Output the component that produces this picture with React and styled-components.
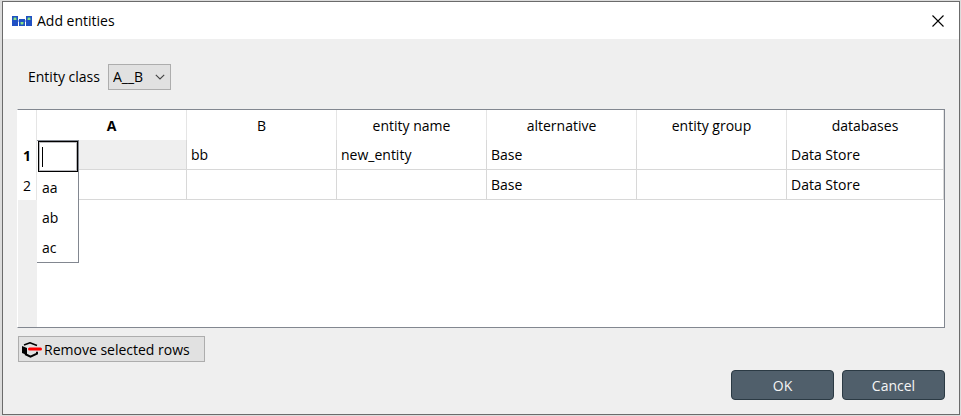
import React from "react";
import styled, { createGlobalStyle } from "styled-components";

const GlobalStyle = createGlobalStyle`
  *, *::before, *::after { box-sizing: border-box; }
  body { margin: 0; background: #dcdcdc; }
  body, button, input, select {
    font-family: "Open Sans", "Noto Sans", sans-serif;
    font-size: 14px;
    line-height: 20px;
    color: #000;
  }
`;

const Screen = styled.div`
  display: flex;
  min-height: 100vh;
  padding: 1px 1px 1px 2px;
`;

const Dialog = styled.main`
  flex: 1;
  display: flex;
  flex-direction: column;
  border: 1px solid #6b6b6b;
  background: #efefef;
`;

const TitleBar = styled.header`
  display: flex;
  align-items: center;
  gap: 5px;
  height: 37px;
  padding: 0 14px 0 9px;
  background: #fff;
`;

const Title = styled.h1`
  flex: 1;
  margin: 0;
  font-size: 14px;
  font-weight: 400;
`;

const CloseButton = styled.button`
  display: flex;
  padding: 0;
  border: 0;
  background: none;
`;

const Body = styled.div`
  flex: 1;
  display: flex;
  flex-direction: column;
  padding: 25px 14px 14px;
`;

const ClassRow = styled.div`
  display: flex;
  align-items: center;
  gap: 8px;
  padding-left: 11px;
  margin-bottom: 19px;
`;

const SelectBox = styled.div`
  display: grid;
  align-items: center;

  > * { grid-area: 1 / 1; }
  > svg { justify-self: end; margin-right: 6px; pointer-events: none; }
`;

const Select = styled.select`
  appearance: none;
  width: 63px;
  height: 26px;
  padding: 0 4px;
  border: 1px solid #adadad;
  border-radius: 0;
  background: #e1e1e1;
`;

const TableView = styled.div`
  flex: 1;
  border: 1px solid #828790;
  border-left-color: #fff;
  background: linear-gradient(to right, #efefef 19px, #fff 19px);
`;

const Table = styled.table`
  width: 100%;
  table-layout: fixed;
  border-collapse: separate;
  border-spacing: 0;
`;

const Column = styled.col`
  width: ${(p) => p.$width || "auto"};
`;

const HeaderCell = styled.th`
  height: 30px;
  padding: 2px 0 0;
  border-right: 1px solid #e5e5e5;
  background: #fff;
  font-weight: ${(p) => (p.$active ? 700 : 400)};
  text-align: center;
`;

const Cell = styled.td`
  position: relative;
  height: 30px;
  padding: 0 4px;
  border-right: 1px solid #d8d8d8;
  border-bottom: 1px solid #d8d8d8;
  background: ${(p) => (p.$active ? "#efefef" : "#fff")};
`;

const Editor = styled.div`
  position: absolute;
  z-index: 1;
  top: 0;
  left: 0;
  width: 42px;
  border: 1px solid #828790;
  border-left: 0;
  background: #fff;
`;

const EditorField = styled.div`
  position: relative;
  border: 1px solid #000;
  margin-left: 1px;

  &::after {
    content: "";
    position: absolute;
    top: 5px;
    left: 3px;
    width: 1px;
    height: 20px;
    background: #000;
  }
`;

const EditorInput = styled.input`
  display: block;
  width: 100%;
  height: 29px;
  padding: 0 3px;
  border: 1px solid #b9b9bd;
  outline: 0;
  background: #fff;
  caret-color: transparent;
`;

const Options = styled.ul`
  margin: 0;
  padding: 0;
  list-style: none;
`;

const Option = styled.li`
  height: 30px;
  padding: 1px 5px 0;
  line-height: 30px;
`;

const RemoveButton = styled.button`
  align-self: flex-start;
  display: flex;
  align-items: center;
  gap: 2px;
  height: 26px;
  margin: 8px 0 8px 1px;
  padding: 2px 14px 0 3px;
  border: 1px solid #adadad;
  background: #e1e1e1;
`;

const Actions = styled.footer`
  display: flex;
  justify-content: flex-end;
  gap: 8px;
`;

const ActionButton = styled.button`
  width: 103px;
  height: 30px;
  padding: 2px 0 0;
  border: 1px solid #2b3a44;
  border-radius: 4px;
  background: #505f6b;
  color: #f5f5f5;
`;

const AppIcon = () => (
  <svg width="20" height="12" viewBox="0 0 20 12" aria-hidden="true">
    <path d="M0 1h6v10H0zM7 4h6v7H7zM14 1h6v10h-6z" fill="#2050c4" />
    <path d="M6 5h1v2H6zM13 5h1v2h-1z" fill="#9fb4e4" />
    <path d="M1 5V4l1-2h2l1 2v1zM8 7h4v1l-1 2H9L8 8zM15 5V4l1-2h2l1 2v1z" fill="#4c9d96" />
    <path d="M2 3h2v2H2zM9 7h2v2H9zM16 3h2v2h-2z" fill="#8fe08a" />
  </svg>
);

const CloseIcon = () => (
  <svg width="14" height="14" viewBox="0 0 14 14" aria-hidden="true">
    <path d="M1.5 1.5l11 11M12.5 1.5l-11 11" stroke="#000" strokeWidth="1.1" />
  </svg>
);

const ChevronIcon = () => (
  <svg width="10" height="6" viewBox="0 0 10 6" aria-hidden="true">
    <path d="M.8.8L5 5 9.2.8" fill="none" stroke="#444" strokeWidth="1.1" />
  </svg>
);

const RemoveIcon = () => (
  <svg width="20" height="16" viewBox="0 0 20 16" aria-hidden="true">
    <path d="M0 4l5 2v7L0 11z" fill="#000" />
    <path d="M2 3L8 .8l7 2.600" fill="none" stroke="#000" strokeWidth="1.600" />
    <path d="M3 12L8.500 14.600l6.500-3V9.800" fill="none" stroke="#000" strokeWidth="2" />
    <path d="M7.500 7h11" stroke="#f00" strokeWidth="3" strokeLinecap="round" />
  </svg>
);

const columns = ["A", "B", "entity name", "alternative", "entity group", "databases"];
const rows = [
  ["", "bb", "new_entity", "Base", "", "Data Store"],
  ["", "", "", "Base", "", "Data Store"],
];
const suggestions = ["aa", "ab", "ac"];

const CellEditor = () => (
  <Editor>
    <EditorField>
      <EditorInput aria-label="A, row 1" />
    </EditorField>
    <Options>
      {suggestions.map((name) => (
        <Option key={name}>{name}</Option>
      ))}
    </Options>
  </Editor>
);

export default function App() {
  return (
    <Screen>
      <GlobalStyle />
      <Dialog>
        <TitleBar>
          <AppIcon />
          <Title>Add entities</Title>
          <CloseButton aria-label="Close">
            <CloseIcon />
          </CloseButton>
        </TitleBar>
        <Body>
          <ClassRow>
            <label htmlFor="entity-class">Entity class</label>
            <SelectBox>
              <Select id="entity-class">
                <option>A__B</option>
              </Select>
              <ChevronIcon />
            </SelectBox>
          </ClassRow>
          <TableView>
            <Table>
              <colgroup>
                <Column $width="19px" />
                {columns.map((name, i) => (
                  <Column key={name} $width={i < columns.length - 1 && "150px"} />
                ))}
              </colgroup>
              <thead>
                <tr>
                  <HeaderCell as="td" />
                  {columns.map((name, i) => (
                    <HeaderCell key={name} scope="col" $active={i === 0}>
                      {name}
                    </HeaderCell>
                  ))}
                </tr>
              </thead>
              <tbody>
                {rows.map((row, r) => (
                  <tr key={r}>
                    <HeaderCell scope="row" $active={r === 0}>
                      {r + 1}
                    </HeaderCell>
                    {row.map((value, c) => {
                      const active = r === 0 && c === 0;
                      return (
                        <Cell key={columns[c]} $active={active}>
                          {active ? <CellEditor /> : value}
                        </Cell>
                      );
                    })}
                  </tr>
                ))}
              </tbody>
            </Table>
          </TableView>
          <RemoveButton>
            <RemoveIcon />
            Remove selected rows
          </RemoveButton>
          <Actions>
            <ActionButton>OK</ActionButton>
            <ActionButton>Cancel</ActionButton>
          </Actions>
        </Body>
      </Dialog>
    </Screen>
  );
}
